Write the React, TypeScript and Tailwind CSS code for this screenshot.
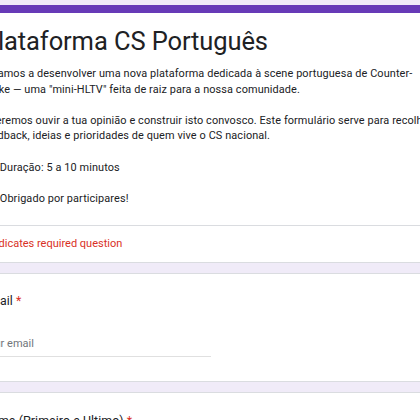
export default function App() {
  return (
    <div className="h-[420px] w-[420px] overflow-hidden bg-[#f0ebf8] font-['Roboto',sans-serif] text-[#202124]">
      <div className="ml-[-43px] flex w-[505px] flex-col gap-[10px] pt-[5px]">
        <section className="rounded-lg border border-t-0 border-[#dadce0] bg-white">
          <div className="h-[8px] rounded-t-lg bg-[#673ab7]" />
          <div className="px-6 pb-[19px]">
            <h1 className="pt-[10px] text-[25.5px] leading-[36px] font-normal tracking-[-0.1px]">
              Plataforma CS Português
            </h1>
            <div className="mt-[7px] w-[454px] text-[10.9px] leading-[15.6px] tracking-[0.1px]">
              <p>
                Estamos a desenvolver uma nova plataforma dedicada à scene
                portuguesa de Counter-Strike — uma "mini-HLTV" feita de raiz
                para a nossa comunidade.
              </p>
              <br />
              <p>
                Queremos ouvir a tua opinião e construir isto convosco. Este
                formulário serve para recolher feedback, ideias e prioridades
                de quem vive o CS nacional.
              </p>
              <br />
              <p>
                <span aria-hidden className="inline-block w-[15px]" /> Duração:
                5 a 10 minutos
              </p>
              <br />
              <p>
                <span aria-hidden className="inline-block w-[15px]" /> Obrigado
                por participares!
              </p>
            </div>
          </div>
          <div className="border-t border-[#dadce0] px-6 py-[10px] text-[11px] leading-[15.6px] text-[#d93025]">
            * Indicates required question
          </div>
        </section>

        <section className="rounded-lg border border-[#dadce0] bg-white px-6 pt-[17px] pb-[24px]">
          <label className="block text-[12.3px] leading-[20px] tracking-[0.1px]">
            Email <span className="text-[#d93025]">*</span>
          </label>
          <div className="mt-[25px] w-[229px] border-b border-[#e0e0e0] pb-[4px] text-[11px] leading-[16px] text-[#70757a]">
            Your email
          </div>
        </section>

        <section className="rounded-lg border border-[#dadce0] bg-white px-6 pt-[18px] pb-[24px]">
          <label className="block text-[12.3px] leading-[20px] tracking-[0.1px]">
            Nome (Primeiro e Ultimo) <span className="text-[#d93025]">*</span>
          </label>
        </section>
      </div>
    </div>
  );
}
